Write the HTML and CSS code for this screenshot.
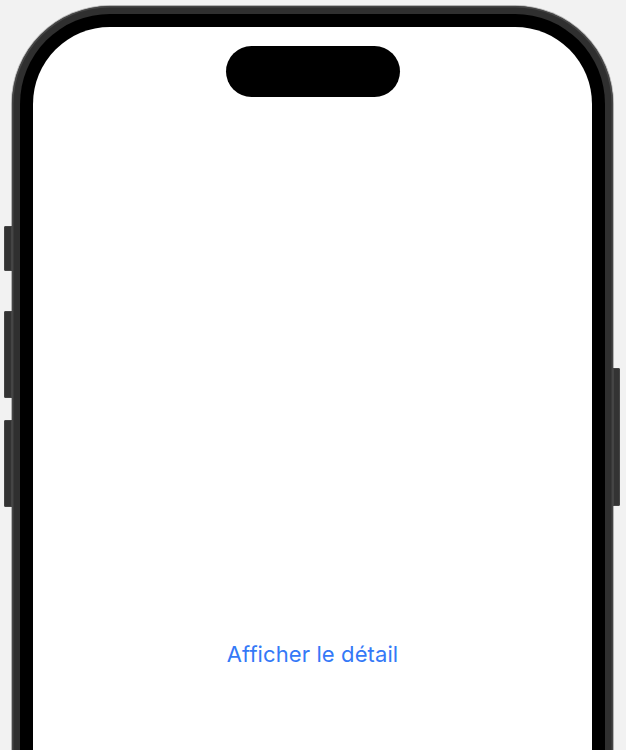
FILE: index.html
```html
<!DOCTYPE html>
<html lang="fr">
<head>
<meta charset="utf-8">
<link rel="stylesheet" href="styles.css">
</head>
<body>
<div class="stage">
  <div class="phone">
    <span class="btn btn-action"></span>
    <span class="btn btn-vol-up"></span>
    <span class="btn btn-vol-down"></span>
    <span class="btn btn-power"></span>
    <div class="bezel">
      <div class="screen">
        <div class="island"></div>
        <a class="link" href="#">Afficher le détail</a>
      </div>
    </div>
  </div>
</div>
</body>
</html>
```
FILE: styles.css
```css
html, body {
  margin: 0;
  padding: 0;
  height: 100%;
  overflow: hidden;
  background: #f2f2f2;
}
.stage {
  padding: 6px 13px 0 12px;
}
.phone {
  position: relative;
  width: 601px;
  height: 900px;
  box-sizing: border-box;
  padding: 8px;
  border-radius: 98px;
  background: #2f2f2f;
  box-shadow: 0 0 0 1px rgba(60,60,60,0.35), inset 0 0 0 1.5px #454545;
}
.bezel {
  height: 100%;
  box-sizing: border-box;
  padding: 13px;
  border-radius: 90px;
  background: #000;
}
.screen {
  height: 100%;
  border-radius: 77px;
  background: #fff;
  display: flex;
  flex-direction: column;
  align-items: center;
  padding-top: 19px;
  box-sizing: border-box;
}
.island {
  width: 174px;
  height: 51px;
  border-radius: 26px;
  background: #000;
}
.link {
  margin-top: 544px;
  font-family: Inter, "Liberation Sans", sans-serif;
  font-size: 22px;
  line-height: 26px;
  color: #3479f7;
  text-decoration: none;
  letter-spacing: 0.1px;
}
.btn {
  position: absolute;
  background: #333;
  box-shadow: inset 0 0 0 1px #444;
  width: 8px;
}
.btn-action { left: -8px; top: 220px; height: 45px; border-radius: 2px 0 0 2px; }
.btn-vol-up { left: -8px; top: 305px; height: 87px; border-radius: 2px 0 0 2px; }
.btn-vol-down { left: -8px; top: 414px; height: 87px; border-radius: 2px 0 0 2px; }
.btn-power { right: -7px; top: 362px; width: 7px; height: 138px; border-radius: 0 2px 2px 0; }
```
